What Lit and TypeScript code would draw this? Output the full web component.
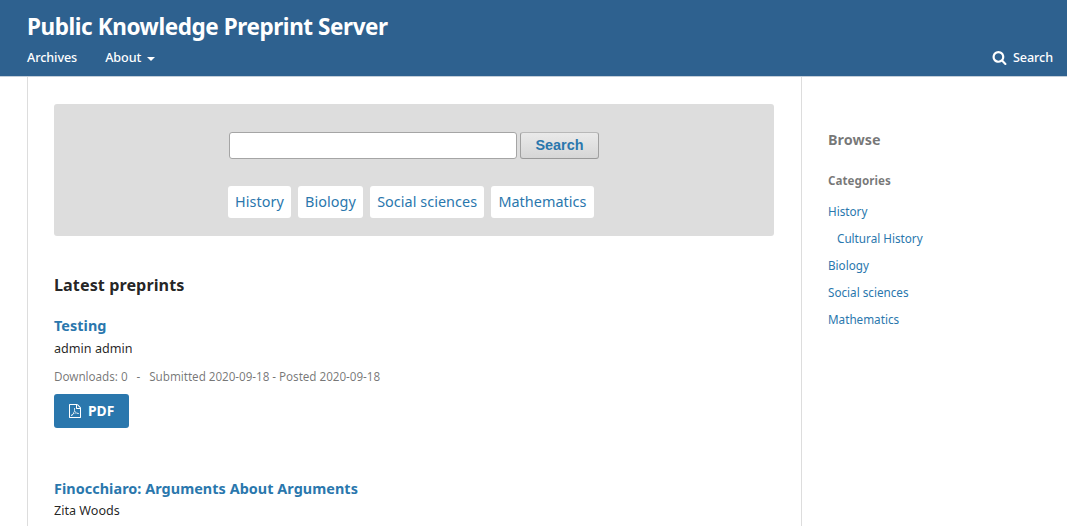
import { LitElement, html, css, svg } from "lit";
import { customElement } from "lit/decorators.js";

const searchIcon = svg`<path d="M1216 832q0-185-131.5-316.5t-316.5-131.5-316.5 131.5-131.5 316.5 131.5 316.5 316.5 131.5 316.5-131.5 131.5-316.5zm512 832q0 52-38 90t-90 38q-54 0-90-38l-343-342q-179 124-399 124-143 0-273.5-55.5t-225-150-150-225-55.5-273.5 55.5-273.5 150-225 225-150 273.5-55.5 273.5 55.5 225 150 150 225 55.5 273.5q0 220-124 399l343 343q37 37 37 90z"/>`;
const pdfIcon = svg`<path d="M1596 380q28 28 48 76t20 88v1152q0 40-28 68t-68 28h-1344q-40 0-68-28t-28-68v-1600q0-40 28-68t68-28h896q40 0 88 20t76 48zm-444-244v376h376q-10-29-22-41l-313-313q-12-12-41-22zm384 1528v-1024h-416q-40 0-68-28t-28-68v-416h-768v1536h1280zm-514-593q33 26 84 56 59-7 117-7 147 0 177 49 16 22 2 52 0 1-1 2l-2 2v1q-6 38-71 38-48 0-115-20t-130-53q-221 24-392 83-153 262-242 262-15 0-28-7l-24-12q-1-1-6-5-10-10-6-36 9-40 56-91.5t132-96.5q14-9 23 6 2 2 2 4 52-85 107-197 68-136 104-262-24-82-30.5-159.5t6.5-127.5q11-40 42-40h22q23 0 35 15 18 21 9 68-2 6-4 8 1 3 1 8v30q-2 123-14 192 55 164 146 238zm-576 411q52-24 137-158-51 40-87.5 84t-49.5 74zm398-920q-15 42-2 132 1-7 7-44 0-3 7-43 1-4 4-8-1-1-1-2t-1-2q-1-22-13-36 0 1-1 2v2zm-124 661q135-54 284-81-2-1-13-9.5t-16-13.5q-76-67-127-176-27 86-83 197-30 56-45 83zm646-16q-24-24-140-24 76 28 124 28 14 0 18-1 0-1-2-3z"/>`;

@customElement("app-root")
export class AppRoot extends LitElement {
  static styles = css`
    :host { display: flex; flex-direction: column; height: 526px; overflow: hidden; background: #fff;
      font-family: "Noto Sans", sans-serif; font-size: 12.6px; line-height: 18px; color: rgba(0, 0, 0, 0.87); }
    * { box-sizing: border-box; }
    h1, h2, h3, h4, p, ul { margin: 0; padding: 0; list-style: none; }
    a { color: #2a77ad; text-decoration: none; }
    header { height: 77px; flex: none; background: #2e618f; border-bottom: 1px solid #c3ced9; padding: 13px 14px 0 27px; }
    header h1 { color: #fff; font-size: 22.5px; letter-spacing: -0.43px; line-height: 27px; font-weight: 700; white-space: nowrap; }
    nav { display: flex; align-items: center; height: 18px; margin-top: 9px; gap: 28px; }
    nav a { display: flex; align-items: center; color: #fff; font-weight: 500; font-size: 12.6px; letter-spacing: -0.08px; }
    .caret { border: 4px solid transparent; border-top-color: #fff; border-bottom: 0; margin: 2px 0 0 6px; }
    .find { margin-left: auto; }
    .find svg { width: 15px; height: 15px; margin: 0 6px 2px 0; }
    svg { fill: currentColor; display: block; }
    .page { display: flex; flex: 1; min-height: 0; }
    main { width: 775px; flex: none; margin-left: 27px; border: solid #ddd; border-width: 0 1px; padding: 27px 27px 0 26px; }
    .panel { height: 132px; background: #ddd; border-radius: 3px; padding: 28px 0 0 174px; }
    form { display: flex; gap: 3px; margin-left: 1px; }
    input { width: 288px; height: 27px; border: 1px solid #a5a5a5; border-radius: 3px; background: #fff; padding: 0 8px; }
    button { width: 79px; height: 27px; border: 1px solid #aaa; border-color: #b8b8b8 #a0a0a0 #999 #a0a0a0; border-radius: 3px; padding: 0 0 1px;
      background: linear-gradient(#eaeaea, #d6d6d6); color: #2a77ad; font: 700 14.4px/24px "Liberation Sans", sans-serif; }
    .tags { display: flex; gap: 7.3px; margin-top: 27px; }
    .tags a { background: #fff; border-radius: 3px; padding: 0 7px; height: 32px; line-height: 32px; font-size: 14.4px; letter-spacing: 0.05px; }
    .latest { font-size: 16.2px; letter-spacing: 0.05px; line-height: 27px; margin-top: 36px; }
    .preprint h3 { font-size: 14.4px; letter-spacing: 0.05px; line-height: 18px; }
    .first { margin-top: 18px; }
    .second { margin-top: 52px; }
    .authors { margin-top: 5px; }
    .second .authors { margin-top: 4px; }
    .meta { margin-top: 9px; font-size: 11.7px; letter-spacing: -0.045px; color: rgba(0, 0, 0, 0.54); white-space: pre; }
    .pdf { display: flex; align-items: center; gap: 6px; width: 75px; height: 34px; margin-top: 9px; padding-left: 14px;
      background: #2a77ad; color: #fff; border-radius: 3px; font-weight: 700; font-size: 13.8px; }
    .pdf svg { width: 14px; height: 14px; }
    aside { padding: 53px 0 0 26px; }
    aside h2 { font-size: 14.4px; line-height: 20px; color: rgba(0, 0, 0, 0.54); }
    aside h4 { font-size: 11.7px; line-height: 18px; color: rgba(0, 0, 0, 0.54); margin: 21px 0 13px; }
    aside li { font-size: 11.7px; line-height: 18px; margin-bottom: 9px; }
    .sub { padding-left: 9px; }
  `;
  render() {
    return html`
      <header>
        <h1>Public Knowledge Preprint Server</h1>
        <nav>
          <a>Archives</a>
          <a>About<span class="caret"></span></a>
          <a class="find"><svg viewBox="0 0 1792 1792">${searchIcon}</svg>Search</a>
        </nav>
      </header>
      <div class="page">
        <main>
          <section class="panel">
            <form><input type="text" aria-label="Search" /><button type="button">Search</button></form>
            <div class="tags">
              ${["History", "Biology", "Social sciences", "Mathematics"].map((t) => html`<a>${t}</a>`)}
            </div>
          </section>
          <h2 class="latest">Latest preprints</h2>
          <article class="preprint first">
            <h3><a>Testing</a></h3>
            <p class="authors">admin admin</p>
            <p class="meta">Downloads: 0   -   Submitted 2020-09-18 - Posted 2020-09-18</p>
            <a class="pdf"><svg viewBox="0 0 1792 1792">${pdfIcon}</svg>PDF</a>
          </article>
          <article class="preprint second">
            <h3><a>Finocchiaro: Arguments About Arguments</a></h3>
            <p class="authors">Zita Woods</p>
          </article>
        </main>
        <aside>
          <h2>Browse</h2>
          <h4>Categories</h4>
          <ul>
            <li><a>History</a></li>
            <li class="sub"><a>Cultural History</a></li>
            <li><a>Biology</a></li>
            <li><a>Social sciences</a></li>
            <li><a>Mathematics</a></li>
          </ul>
        </aside>
      </div>
    `;
  }
}
